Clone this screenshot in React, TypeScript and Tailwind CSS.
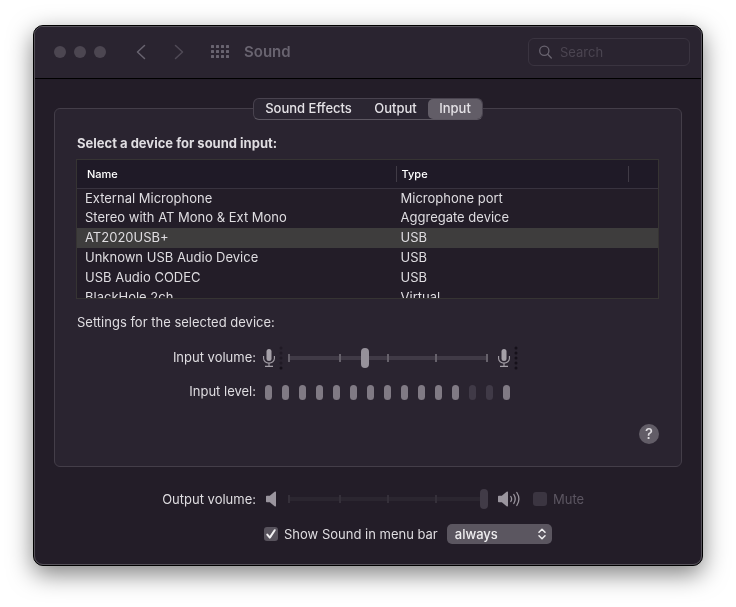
import { useState } from "react";

export default function App() {
  return (
    <main className="px-[33px] pt-[25px] pb-10 bg-white font-[Inter,'Liberation_Sans',sans-serif] text-[13px] leading-4 text-[#dfdde1]">
      <div className="rounded-[10px] border border-black bg-[#231d28] shadow-[0_8px_24px_rgba(0,0,0,0.5)]">
        <div className="overflow-hidden rounded-[9px] border border-[#57535b]">
          <Toolbar />
          <div className="px-[19px] pt-[19px] pb-5">
            <Tabs />
            <InputPanel />
            <OutputSettings />
          </div>
        </div>
      </div>
    </main>
  );
}

function Toolbar() {
  return (
    <header className="flex h-[52px] items-center border-b border-black bg-[#2a2430] px-[19px] pb-0.5">
      {/* Window buttons */}
      <div className="flex gap-2">
        <button aria-label="Close" className="size-3 rounded-full bg-[#4c4651]" />
        <button aria-label="Minimize" className="size-3 rounded-full bg-[#4c4651]" />
        <button aria-label="Zoom" className="size-3 rounded-full bg-[#4c4651]" />
      </div>

      <button aria-label="Back" className="ml-[30px]">
        <svg width="10" height="16" viewBox="0 0 10 16" fill="none" stroke="#696470" strokeWidth="1.5" strokeLinecap="round" strokeLinejoin="round">
          <path d="M8.5 1.500 1.500 8l7 6.500" />
        </svg>
      </button>
      <button aria-label="Forward" className="ml-7">
        <svg width="10" height="16" viewBox="0 0 10 16" fill="none" stroke="#504a56" strokeWidth="1.5" strokeLinecap="round" strokeLinejoin="round">
          <path d="m1.500 1.500 7 6.500-7 6.500" />
        </svg>
      </button>
      <button aria-label="Show all" className="ml-[27px]">
        <svg width="18" height="13" viewBox="0 0 18 13" fill="#696470">
          {[0, 5, 10].map((y) =>
            [0, 5, 10, 15].map((x) => (
              <rect key={`${x}-${y}`} x={x} y={y} width="3" height="3" rx="0.5" />
            ))
          )}
        </svg>
      </button>
      <h1 className="ml-[15px] text-[15px] leading-5 font-semibold text-[#696470]">Sound</h1>

      <label className="ml-auto -mr-2 flex h-7 w-[162px] items-center gap-2 rounded-md border border-[#3a3440] pl-2.5">
        <svg className="shrink-0" width="13" height="14" viewBox="0 0 13 14" fill="none" stroke="#696470" strokeWidth="1.300" strokeLinecap="round">
          <circle cx="5.300" cy="5.700" r="4.600" />
          <path d="m8.700 9.200 3.600 3.800" />
        </svg>
        <input
          type="search"
          aria-label="Search"
          placeholder="Search"
          className="w-full min-w-0 bg-transparent outline-none placeholder:text-[#4b4551]"
        />
      </label>
    </header>
  );
}

function Tabs() {
  const [active, setActive] = useState("Input");

  return (
    <div className="relative z-10 flex justify-center">
      <div role="tablist" className="flex h-[22px] rounded-md border border-[#49434f] border-b-[#5d5862] bg-[#2b2632]">
        {tabs.map((tab) => (
          <button
            key={tab.label}
            role="tab"
            aria-selected={active === tab.label}
            onClick={() => setActive(tab.label)}
            className={`${tab.width} rounded-[5px] pb-0.5 font-medium text-[#e4e2e6] aria-selected:bg-[#625d67]`}
          >
            {tab.label}
          </button>
        ))}
      </div>
    </div>
  );
}

function InputPanel() {
  return (
    <section className="-mt-3 rounded-md border border-[#443e49] bg-[#2a2430] px-[22px] pt-[26px] pb-[22px]">
      <h2 className="font-bold">Select a device for sound input:</h2>

      <div className="mt-2 -ml-px h-[140px] overflow-y-auto border border-[#363433] bg-[#231d28] [scrollbar-width:none]">
        <table className="w-full table-fixed text-left">
          <colgroup>
            <col className="w-[55%]" />
            <col className="w-[40%]" />
            <col />
          </colgroup>
          <thead>
            <tr className="h-7 border-b border-[#38333f] bg-[#1f1a27] text-[11px] leading-4 text-white">
              <th className="p-0 font-medium">
                <div className="border-r border-[#403b46] pl-2.5">Name</div>
              </th>
              <th className="p-0 font-medium">
                <div className="border-r border-[#403b46] pl-[5px]">Type</div>
              </th>
              <th className="p-0" />
            </tr>
          </thead>
          <tbody className="leading-[18px]">
            {devices.map((device) => (
              <tr key={device.name} className={device.selected ? "h-5 bg-[#3e3d3d]" : "h-5"}>
                <td className="p-0 pl-2 align-top">{device.name}</td>
                <td className="p-0 pl-1 align-top">{device.type}</td>
                <td className="p-0" />
              </tr>
            ))}
          </tbody>
        </table>
      </div>

      <h3 className="mt-[15px]">Settings for the selected device:</h3>

      {/* Input volume */}
      <div className="mt-[18px] flex h-5 items-center">
        <label htmlFor="input-volume" className="w-[179px] pb-0.5 text-right">Input volume:</label>
        <MicIcon />
        <VolumeSlider id="input-volume" value={38} />
        <span className="ml-[3px]">
          <MicIcon loud />
        </span>
      </div>

      {/* Input level */}
      <div className="mt-[14px] flex h-5 items-center">
        <span id="input-level" className="w-[179px] pb-0.5 text-right">Input level:</span>
        <div
          role="meter"
          aria-labelledby="input-level"
          aria-valuemin={0}
          aria-valuemax={15}
          aria-valuenow={12}
          className="ml-[9px] flex gap-2.5"
        >
          {levels.map((on, index) => (
            <span key={index} className={`h-[15px] w-[7px] rounded-full ${on ? "bg-[#807a84]" : "bg-[#403a47]"}`} />
          ))}
        </div>
      </div>

      <div className="mt-[22px] flex justify-end">
        <button aria-label="Help" className="size-5 rounded-full bg-[#625d67] text-[15px] leading-5 font-medium">
          ?
        </button>
      </div>
    </section>
  );
}

function OutputSettings() {
  return (
    <section className="mt-[22px] pl-[23px]">
      <div className="flex h-5 items-center">
        <label htmlFor="output-volume" className="w-[179px] text-right">Output volume:</label>
        <svg className="ml-2.5 mr-3" width="10" height="16" viewBox="0 0 10 16" fill="#9a959e">
          <path d="M0 5.500q0-.8.8-.8h3L8.600.8Q10 0 10 1.200v13.600q0 1.200-1.400.4L3.800 11.300h-3q-.8 0-.8-.8z" />
        </svg>
        <VolumeSlider id="output-volume" value={100} disabled />
        <svg className="ml-2.5" width="23" height="16" viewBox="0 0 23 16" fill="none" stroke="#9a959e" strokeWidth="1.300" strokeLinecap="round">
          <path fill="#9a959e" stroke="none" d="M0 5.500q0-.8.8-.8h3L8.600.8Q10 0 10 1.200v13.600q0 1.200-1.400.4L3.800 11.300h-3q-.8 0-.8-.8z" />
          <path d="M12.800 5.500q1.600 2.500 0 5M15.800 3.500q2.800 4.500 0 9M18.800 1.500q4.200 6.500 0 13" />
        </svg>
        <label className="ml-3 flex items-center gap-1.5 text-[#5c5662]">
          <input type="checkbox" disabled className="size-3.5 appearance-none rounded-[3px] bg-[#3b3541]" />
          Mute
        </label>
      </div>

      <div className="mt-[15px] flex h-5 items-center pl-[187px]">
        <label className="flex items-center gap-1.5">
          <span className="grid">
            <input
              type="checkbox"
              defaultChecked
              className="peer col-start-1 row-start-1 size-3.5 appearance-none rounded-[3px] bg-[#58535d]"
            />
            <svg
              className="pointer-events-none invisible col-start-1 row-start-1 peer-checked:visible"
              width="14"
              height="14"
              viewBox="0 0 14 14"
              fill="none"
              stroke="#f2f1f3"
              strokeWidth="2"
              strokeLinecap="round"
              strokeLinejoin="round"
            >
              <path d="m3.300 7.600 2.500 3L10.700 3.200" />
            </svg>
          </span>
          Show Sound in menu bar
        </label>
        <span className="ml-[9px] grid items-center">
          <select
            aria-label="Show Sound in menu bar"
            className="col-start-1 row-start-1 h-5 w-[105px] appearance-none rounded-[5px] bg-[#5b5660] pl-2 font-medium text-[#efeef0]"
          >
            <option>always</option>
            <option>when active</option>
          </select>
          <svg
            className="pointer-events-none col-start-1 row-start-1 mr-1.5 justify-self-end"
            width="8"
            height="12"
            viewBox="0 0 8 12"
            fill="none"
            stroke="#efeef0"
            strokeWidth="1.500"
            strokeLinecap="round"
            strokeLinejoin="round"
          >
            <path d="M1 4.200 4 1.200l3 3M1 7.800l3 3 3-3" />
          </svg>
        </span>
      </div>
    </section>
  );
}

function VolumeSlider({ id, value, disabled }: { id: string; value: number; disabled?: boolean }) {
  return (
    <div className="grid w-[200px] items-center">
      {/* Track and tick marks, the thumb is drawn by the input over them */}
      <svg className="col-start-1 row-start-1" width="200" height="8" viewBox="0 0 200 8">
        <rect y="2" width="200" height="4" rx="1" fill={disabled ? "#2b2630" : "#403a46"} />
        {ticks.map((x) => (
          <rect key={x} x={x} width="2" height="8" fill={disabled ? "#35303a" : "#66616b"} />
        ))}
      </svg>
      <input
        id={id}
        type="range"
        defaultValue={value}
        disabled={disabled}
        className="col-start-1 row-start-1 h-5 w-full appearance-none bg-transparent [&::-webkit-slider-thumb]:h-5 [&::-webkit-slider-thumb]:w-2 [&::-webkit-slider-thumb]:appearance-none [&::-webkit-slider-thumb]:rounded-full [&::-webkit-slider-thumb]:bg-[#96919a] disabled:[&::-webkit-slider-thumb]:bg-[#413b47]"
      />
    </div>
  );
}

function MicIcon({ loud }: { loud?: boolean }) {
  return (
    <svg className="ml-[7px] mr-[5px] shrink-0" width="20" height="24" viewBox="0 0 20 24" fill="none">
      <rect x="3.500" y="3" width="5" height="12" rx="2.500" fill="#a5a0a8" />
      <path d="M.6 10v2.500a5.400 4.600 0 0 0 10.800 0V10M6 17.200V20M2 20.400h8" stroke="#a5a0a8" strokeWidth="1.100" />
      {[2, 7, 12, 17, 22].map((y) => (
        <circle key={y} cx="18" cy={y} r="1.500" fill={loud || y === 22 ? "#151019" : "#201a25"} />
      ))}
    </svg>
  );
}

const tabs = [
  { label: "Sound Effects", width: "w-[109px]" },
  { label: "Output", width: "w-[65px]" },
  { label: "Input", width: "w-[54px]" },
];

const devices = [
  { name: "External Microphone", type: "Microphone port" },
  { name: "Stereo with AT Mono & Ext Mono", type: "Aggregate device" },
  { name: "AT2020USB+", type: "USB", selected: true },
  { name: "Unknown USB Audio Device", type: "USB" },
  { name: "USB Audio CODEC", type: "USB" },
  { name: "BlackHole 2ch", type: "Virtual" },
];

const ticks = [0, 51, 99, 147, 198];

// The last bar stays lit as the peak marker
const levels = [true, true, true, true, true, true, true, true, true, true, true, true, false, false, true];
